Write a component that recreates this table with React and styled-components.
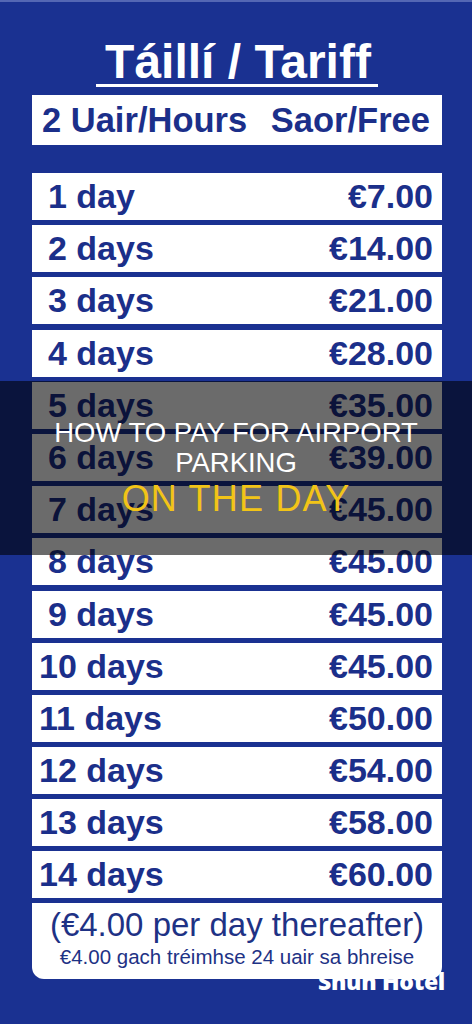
import React from "react";
import styled, { createGlobalStyle } from "styled-components";

const GlobalStyle = createGlobalStyle`
  html, body {
    margin: 0;
    padding: 0;
    background: #1a3191;
  }
  * {
    box-sizing: border-box;
  }
`;

const Page = styled.div`
  position: relative;
  width: 472px;
  height: 1024px;
  overflow: hidden;
  background: #1a3191;
  border-top: 2px solid #5467b4;
  font-family: "Liberation Sans", Arial, sans-serif;
  color: #1b2f8a;
`;

const Sign = styled.div`
  display: flex;
  flex-direction: column;
  align-items: center;
  padding: 37.5px 30px 0 32px;
`;

const Title = styled.h1`
  margin: 0;
  padding: 0 7px 0 9px;
  font-size: 48px;
  line-height: 44px;
  font-weight: 700;
  color: #ffffff;
  border-bottom: 3px solid #ffffff;
  white-space: nowrap;
`;

const FreeBox = styled.div`
  align-self: stretch;
  margin-top: 8.5px;
  height: 50px;
  background: #ffffff;
  display: flex;
  align-items: center;
  justify-content: space-between;
  padding: 0 12px 0 10px;
  font-size: 34.5px;
  font-weight: 700;
  white-space: nowrap;
`;

const Rows = styled.div`
  align-self: stretch;
  margin-top: 28px;
  display: flex;
  flex-direction: column;
  gap: 5.2px;
`;

const Row = styled.div`
  height: 47px;
  background: #ffffff;
  display: flex;
  align-items: center;
  justify-content: space-between;
  padding: 0 9px 0 ${(p) => (p.$wide ? 7 : 16)}px;
  font-size: 34px;
  font-weight: 700;
  white-space: nowrap;
`;

const Footer = styled.div`
  position: relative;
  z-index: 2;
  align-self: stretch;
  margin-top: 5px;
  height: 76px;
  background: #ffffff;
  border-radius: 0 0 12px 12px;
  display: flex;
  flex-direction: column;
  align-items: center;
  padding-top: 3px;
  color: #1e3285;
`;

const FootMain = styled.div`
  font-size: 33px;
  line-height: 38px;
  white-space: nowrap;
`;

const FootSub = styled.div`
  font-size: 20.5px;
  line-height: 24px;
  margin-top: 1px;
  white-space: nowrap;
`;

const Brand = styled.div`
  align-self: flex-end;
  margin-top: -14px;
  margin-right: -3px;
  font-family: "Open Sans", "Liberation Sans", sans-serif;
  font-size: 23px;
  font-weight: 800;
  color: #ffffff;
  letter-spacing: -0.3px;
`;

const Band = styled.div`
  position: absolute;
  left: 0;
  right: 0;
  top: 379px;
  height: 174px;
  background: rgba(0, 0, 0, 0.58);
  z-index: 5;
  display: flex;
  flex-direction: column;
  align-items: center;
  justify-content: center;
  padding-top: 2px;
  font-family: "Liberation Sans", Arial, sans-serif;
  text-align: center;
`;

const Headline = styled.div`
  font-size: ${(p) => p.$size}px;
  line-height: ${(p) => p.$lh}px;
  letter-spacing: ${(p) => p.$track || 0}px;
  color: ${(p) => (p.$accent ? "#f2c417" : "#ffffff")};
  white-space: nowrap;
`;

const tariff = [
  ["1 day", "€7.00"],
  ["2 days", "€14.00"],
  ["3 days", "€21.00"],
  ["4 days", "€28.00"],
  ["5 days", "€35.00"],
  ["6 days", "€39.00"],
  ["7 days", "€45.00"],
  ["8 days", "€45.00"],
  ["9 days", "€45.00"],
  ["10 days", "€45.00"],
  ["11 days", "€50.00"],
  ["12 days", "€54.00"],
  ["13 days", "€58.00"],
  ["14 days", "€60.00"],
];

export default function App() {
  return (
    <>
      <GlobalStyle />
      <Page>
        <Sign>
          <Title>Táillí / Tariff</Title>
          <FreeBox>
            <span>2 Uair/Hours</span>
            <span>Saor/Free</span>
          </FreeBox>
          <Rows>
            {tariff.map(([label, price]) => (
              <Row key={label} $wide={label.length > 6}>
                <span>{label}</span>
                <span>{price}</span>
              </Row>
            ))}
          </Rows>
          <Footer>
            <FootMain>(€4.00 per day thereafter)</FootMain>
            <FootSub>€4.00 gach tréimhse 24 uair sa bhreise</FootSub>
          </Footer>
          <Brand>Shun Hotel</Brand>
        </Sign>
        <Band>
          <Headline $size={27.5} $lh={30}>HOW TO PAY FOR AIRPORT</Headline>
          <Headline $size={27.5} $lh={30}>PARKING</Headline>
          <Headline $size={36} $lh={42} $track={1.2} $accent>
            ON THE DAY
          </Headline>
        </Band>
      </Page>
    </>
  );
}
